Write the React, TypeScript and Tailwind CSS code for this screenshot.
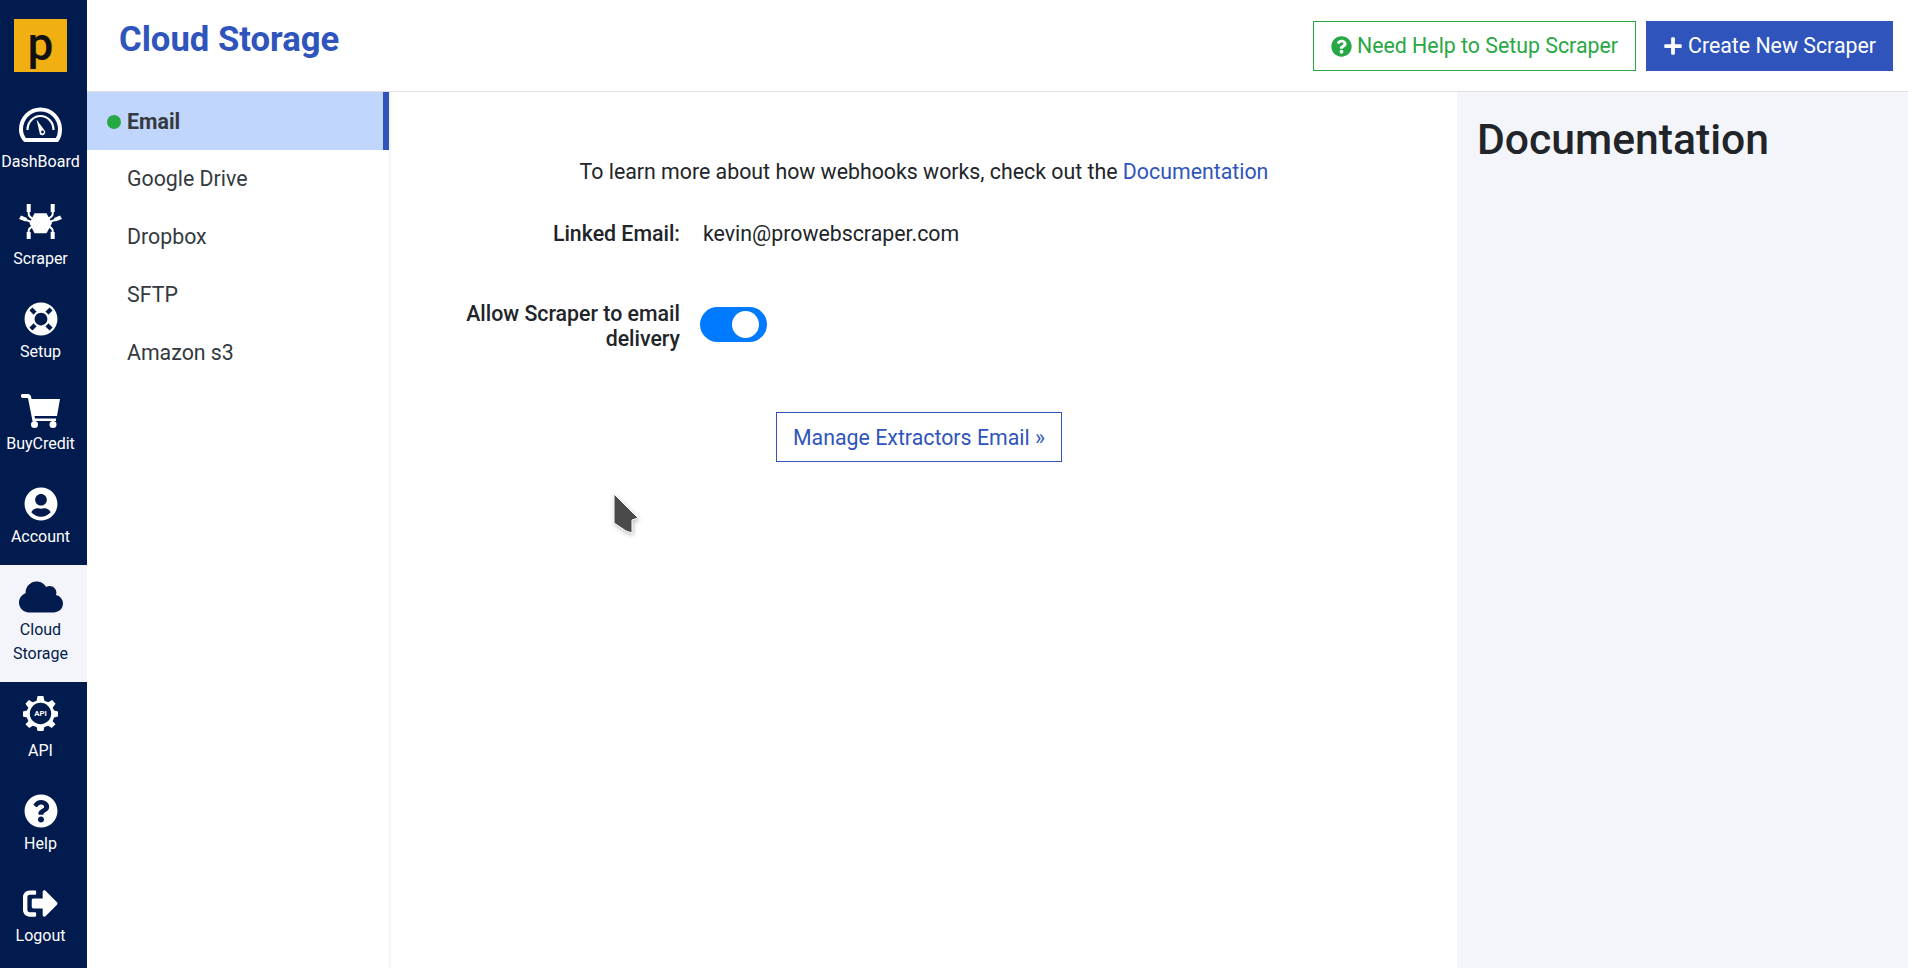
import type { ReactNode } from "react";
import {
  FaCloud,
  FaLifeRing,
  FaPlus,
  FaQuestionCircle,
  FaSignOutAlt,
  FaUserCircle,
} from "react-icons/fa";

const GaugeIcon = () => (
  <svg viewBox="0 0 43 35" className="h-[35px] w-[43px]" fill="none">
    <path
      d="M6 33H38C40.500 29.500 41 26 41 22.500C41 11 32 2.500 21.500 2.500C11 2.500 2 11 2 22.500C2 26 3 29.500 6 33Z"
      stroke="currentColor"
      strokeWidth="4"
      strokeLinejoin="round"
    />
    <path
      d="M8.500 23C8.500 15 14.500 9 21.500 9C28.500 9 34.500 15 34.500 23"
      stroke="currentColor"
      strokeWidth="2.200"
    />
    <path d="M17.500 12.500L26 24C27 27.500 23.500 29.500 21 27.500Z" fill="currentColor" />
    <circle cx="23.500" cy="25" r="1.400" fill="#021b4e" />
  </svg>
);

const ScraperIcon = () => (
  <svg viewBox="0 0 43 35" className="h-[35px] w-[43px]" fill="none">
    <path d="M15.500 9.300H27.500L33 19.300L27.500 29.300H15.500L10.500 19.300Z" fill="currentColor" />
    <path
      d="M9.700 7V10C9.700 13 12 14 15.500 15.500M33.700 7V10C33.700 13 31 14 27.500 15.500M9.700 28V26.500C9.700 24 12 23 15.500 21.500M33.700 28V26.500C33.700 24 31 23 27.500 21.500M6 15.500L12.500 18M37 15.500L30.500 18"
      stroke="currentColor"
      strokeWidth="2"
    />
    <path
      d="M7.700 0H11.700V8H7.700ZM31.700 0H35.700V8H31.700ZM7.700 28H11.700V35H7.700ZM31.700 28H35.700V35H31.700ZM2 11.500L8 14L6.500 17.500L0 15ZM41 11.500L35 14L36.500 17.500L43 15Z"
      fill="currentColor"
    />
  </svg>
);

const CartIcon = () => (
  <svg viewBox="0 0 39 34" className="h-[34px] w-[39px]" fill="currentColor">
    <path d="M0 1.500C0 .5 .5 0 1.500 0H7C8.500 0 9.500 1 10 2.500L10.600 5H39L36 22H13.500L14 24.500H35V27H11.500L7 4H1.500C.5 4 0 3 0 1.500Z" />
    <circle cx="13.500" cy="30.500" r="3.500" />
    <circle cx="32" cy="30.500" r="3.500" />
  </svg>
);

const ApiIcon = () => (
  <svg viewBox="0 0 36 36" className="h-[35px] w-[35px]">
    <path
      d="M15 0H21L22 5L26 6.500L30 4L33.500 8L30.500 12L32 15L36 16V21L32 22L30.500 26L33.500 29L29.500 33L26 30.500L22 32L21 36H15L14 32L10 30.500L6.500 33L2.500 29L5.500 26L4 22L0 21V16L4 15L5.500 12L2.500 8L6 4L10 6.500L14 5Z"
      fill="currentColor"
    />
    <circle cx="18" cy="18" r="11" fill="#021b4e" />
    <text
      x="18"
      y="21"
      textAnchor="middle"
      fill="currentColor"
      fontSize="8"
      fontWeight="700"
      fontFamily="Roboto, sans-serif"
    >
      API
    </text>
  </svg>
);

interface SideItemProps {
  icon: ReactNode;
  label: string;
  // full class strings for the row height / top padding
  box: string;
  tall?: boolean;
  active?: boolean;
}

const SideItem = ({ icon, label, box, tall, active }: SideItemProps) => (
  <div
    className={`flex flex-col items-center pr-[6px] text-center text-[16px] leading-[24px] ${box} ${
      active ? "bg-[#f4f5fa] text-[#021b4e]" : "text-white"
    }`}
  >
    <div className={`flex items-center justify-center ${tall ? "h-[53px]" : "h-[44px]"}`}>
      {icon}
    </div>
    <span className="mt-[-1px] w-[81px]">{label}</span>
  </div>
);

const subItems = ["Google Drive", "Dropbox", "SFTP", "Amazon s3"];

export default function App() {
  return (
    <div className="flex h-[968px] w-[1908px] overflow-hidden bg-white font-['Roboto',sans-serif] text-[21.33px] text-[#212529]">
      <aside className="flex w-[87px] shrink-0 flex-col bg-[#021b4e]">
        <div className="flex h-[96px] shrink-0 justify-center pt-[19px] pr-[6px]">
          <div className="flex h-[53px] w-[53px] items-center justify-center bg-[#f2af12] pb-[4px] text-[46px] leading-none font-medium text-[#111]">
            p
          </div>
        </div>
        <SideItem tall box="h-[97px] pt-[2px]" icon={<GaugeIcon />} label="DashBoard" />
        <SideItem tall box="h-[93px] pt-[2px]" icon={<ScraperIcon />} label="Scraper" />
        <SideItem box="h-[93px] pt-[11px]" icon={<FaLifeRing size={34} />} label="Setup" />
        <SideItem box="h-[93px] pt-[10px]" icon={<CartIcon />} label="BuyCredit" />
        <SideItem box="h-[93px] pt-[10px]" icon={<FaUserCircle size={34} />} label="Account" />
        <SideItem active box="h-[117px] pt-[10px]" icon={<FaCloud size={44} />} label="Cloud Storage" />
        <SideItem tall box="h-[93px] pt-[5px]" icon={<ApiIcon />} label="API" />
        <SideItem box="h-[93px] pt-[14px]" icon={<FaQuestionCircle size={34} />} label="Help" />
        <SideItem box="h-[93px] pt-[13px]" icon={<FaSignOutAlt size={35} />} label="Logout" />
      </aside>

      <div className="flex min-w-0 flex-1 flex-col">
        <header className="flex h-[92px] shrink-0 items-start justify-between border-b border-[#dfe1e6] pr-[15px] pl-[32px]">
          <h1 className="mt-[18px] text-[34.67px] leading-[42px] font-bold text-[#2f55bd]">
            Cloud Storage
          </h1>
          <div className="mt-[21px] flex gap-[10px]">
            <button className="flex h-[50px] w-[323px] items-center justify-center gap-[5px] border border-[#28a745] text-[#28a745]">
              <FaQuestionCircle size={21} />
              Need Help to Setup Scraper
            </button>
            <button className="flex h-[50px] w-[247px] items-center justify-center gap-[5px] bg-[#2f55bd] text-white">
              <FaPlus size={20} />
              Create New Scraper
            </button>
          </div>
        </header>

        <div className="flex min-h-0 flex-1">
          <nav className="w-[304px] shrink-0 border-r-2 border-[#f4f5fa] text-[#343a40]">
            <div className="flex h-[58px] items-center border-r-[6px] border-[#2f55bd] bg-[#c1d6fd] pt-[1px] pl-[20px] font-bold">
              <span className="mr-[6px] h-[14px] w-[14px] rounded-full bg-[#28a745]" />
              Email
            </div>
            {subItems.map((item) => (
              <div key={item} className="flex h-[58px] items-center pb-[1px] pl-[40px]">
                {item}
              </div>
            ))}
          </nav>

          <main className="relative w-[1066px] shrink-0 pt-[65px]">
            <p className="text-center leading-[30px]">
              To learn more about how webhooks works, check out the{" "}
              <a className="text-[#2f55bd]">Documentation</a>
            </p>
            <div className="mt-[32px] flex items-center leading-[30px]">
              <div className="w-[289px] text-right font-medium">Linked Email:</div>
              <div className="ml-[23px]">kevin@prowebscraper.com</div>
            </div>
            <div className="mt-[50px] flex items-center">
              <div className="mb-[-2px] w-[289px] pt-[2px] pl-[40px] text-right leading-[25px] font-medium">
                Allow Scraper to email delivery
              </div>
              <div className="ml-[20px] flex h-[35px] w-[67px] items-center justify-end rounded-full bg-[#007bff] pr-[8px]">
                <span className="h-[27px] w-[27px] rounded-full bg-white" />
              </div>
            </div>
            <button className="mt-[63px] ml-[385px] flex h-[50px] w-[286px] items-center justify-center border border-[#2f55bd] pt-[2px] text-[#2f55bd]">
              Manage Extractors Email »
            </button>
            {/* recorded mouse pointer, sits over the page */}
            <svg
              viewBox="0 0 26 42"
              className="absolute top-[402px] left-[222px] h-[42px] w-[26px] drop-shadow-[1px_2px_2px_rgba(0,0,0,0.25)]"
            >
              <path
                d="M1 0L25 24L19 26V39L13 37L1 29Z"
                fill="#4a4a4a"
                stroke="#fff"
                strokeWidth="1"
              />
            </svg>
          </main>

          <section className="flex-1 bg-[#f4f5fa] pt-[23px] pl-[20px]">
            <h2 className="text-[42.67px] leading-[48px] font-medium">Documentation</h2>
          </section>
        </div>
      </div>
    </div>
  );
}
